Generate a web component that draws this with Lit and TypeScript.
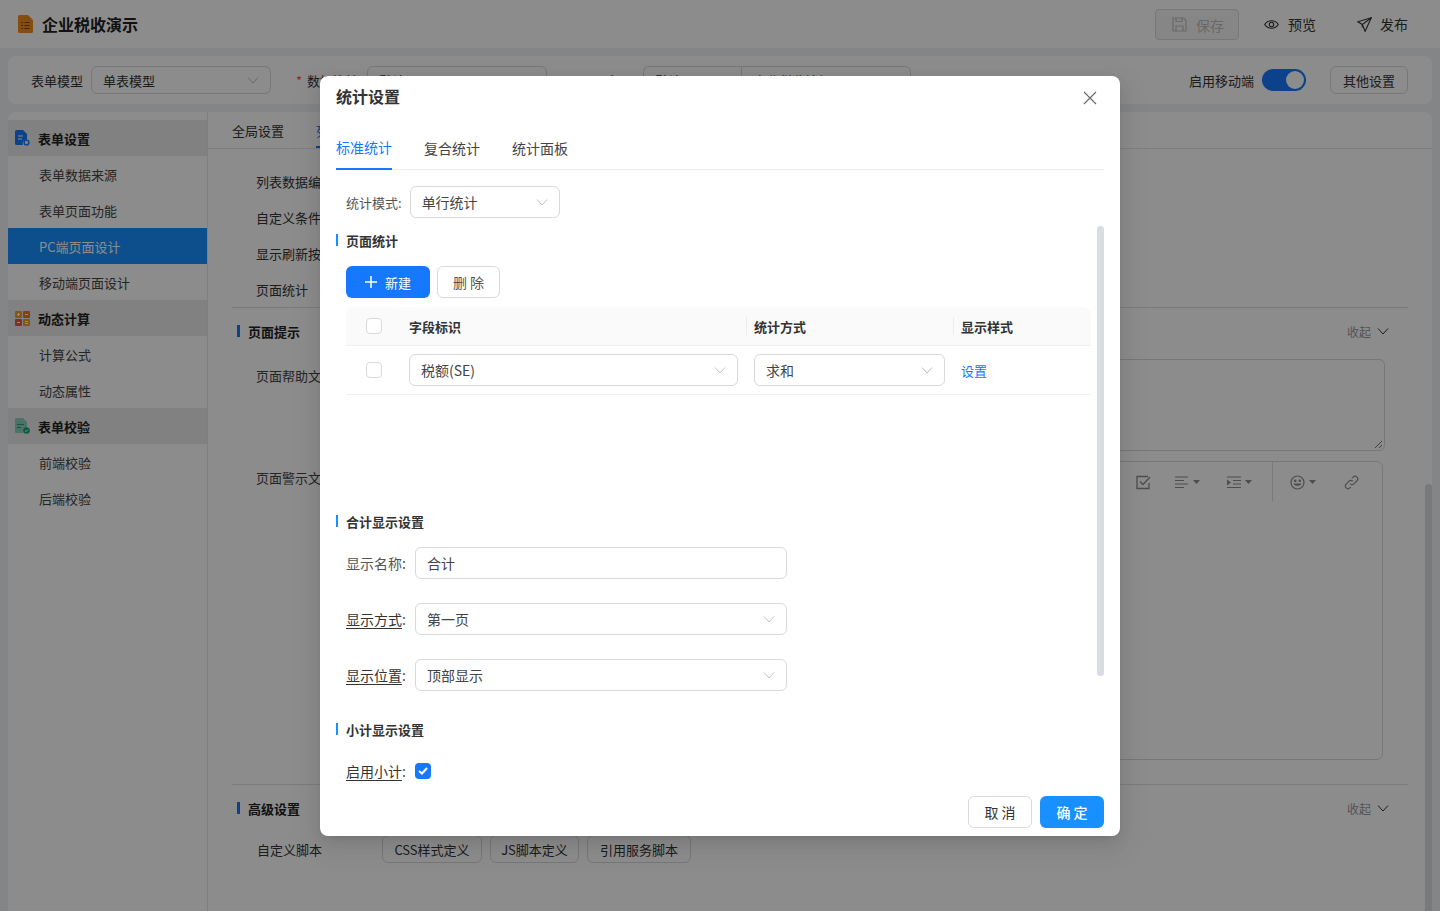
import { LitElement, html, css, svg } from "lit";
import { customElement } from "lit/decorators.js";

const chevron = (size = 12, color = "#bfbfbf") => html`<svg class="chev" width=${size} height=${size} viewBox="0 0 12 12" fill="none" stroke=${color} stroke-width="1"><path d="M1 3.5 6 9l5-5.500" /></svg>`;

const caret = svg`<path d="M0 0h7L3.500 4z" fill="#8c8c8c" />`;

const menu = [
  { title: "表单设置", icon: "form", items: ["表单数据来源", "表单页面功能", "PC端页面设计", "移动端页面设计"] },
  { title: "动态计算", icon: "calc", items: ["计算公式", "动态属性"] },
  { title: "表单校验", icon: "check", items: ["前端校验", "后端校验"] },
];

@customElement("app-root")
export class AppRoot extends LitElement {
  static styles = css`
    :host {
      display: block;
      position: relative;
      height: 911px;
      overflow: hidden;
      background: #f0f2f5;
      color: #333;
      font-family: "Noto Sans CJK SC", "Noto Sans", sans-serif;
      font-size: 13px;
    }
    .topbar {
      display: flex;
      align-items: center;
      height: 48px;
      padding: 0 32px 0 18px;
      background: #fff;
    }
    .app-name {
      margin-left: 9px;
      flex: 1;
      font-size: 16px;
      font-weight: 700;
      color: #222;
    }
    .save {
      display: flex;
      align-items: center;
      box-sizing: border-box;
      width: 84px;
      height: 31px;
      margin-top: 1px;
      padding-left: 16px;
      gap: 9px;
      border: 1px solid #d9d9d9;
      border-radius: 4px;
      background: #f5f5f5;
      color: #bfbfbf;
      font-size: 14px;
    }
    .action {
      display: flex;
      align-items: center;
      gap: 9px;
      font-size: 14px;
      color: #333;
    }
    .action.preview {
      margin-left: 25px;
    }
    .action.publish {
      margin-left: 41px;
      gap: 8px;
    }
    .filter {
      display: flex;
      align-items: center;
      height: 48px;
      margin: 8px 8px 8px 8px;
      padding: 0 24px 0 23px;
      border-radius: 8px;
      background: #fff;
    }
    .sel {
      display: flex;
      align-items: center;
      justify-content: space-between;
      box-sizing: border-box;
      border: 1px solid #d9d9d9;
      border-radius: 6px;
      background: #fff;
    }
    .filter .sel {
      height: 28px;
      margin-left: 8px;
      padding: 0 11px;
      font-size: 13px;
    }
    .req {
      margin-left: 25px;
      margin-right: 5px;
      color: #ff4d4f;
    }
    .joined {
      display: flex;
      margin-left: 8px;
    }
    .joined .sel {
      margin-left: 0;
    }
    .joined .sel:first-child {
      border-radius: 6px 0 0 6px;
      border-right: 0;
    }
    .joined .sel:last-child {
      border-radius: 0 6px 6px 0;
    }
    .spacer {
      flex: 1;
    }
    .toggle {
      display: flex;
      justify-content: flex-end;
      box-sizing: border-box;
      width: 44px;
      height: 22px;
      margin-left: 8px;
      padding: 2px;
      border-radius: 11px;
      background: #1677ff;
    }
    .toggle i {
      width: 18px;
      height: 18px;
      border-radius: 50%;
      background: #fff;
    }
    .btn {
      display: flex;
      align-items: center;
      justify-content: center;
      box-sizing: border-box;
      border: 1px solid #d9d9d9;
      border-radius: 6px;
      background: #fff;
    }
    .other {
      width: 78px;
      height: 28px;
      margin-left: 24px;
    }
    .main {
      display: flex;
      height: 799px;
      margin: 0 8px;
      border-radius: 8px 8px 0 0;
      background: #fff;
    }
    .side {
      box-sizing: border-box;
      width: 200px;
      padding-top: 8px;
      border-right: 1px solid #e8e8e8;
    }
    .group {
      display: flex;
      align-items: center;
      gap: 8px;
      height: 36px;
      padding-left: 7px;
      background: #ebebeb;
      font-weight: 700;
      color: #222;
    }
    .group svg {
      flex: none;
    }
    .item {
      display: flex;
      align-items: center;
      height: 36px;
      padding-left: 31px;
      color: #444;
    }
    .item.on {
      background: #1890ff;
      color: #fff;
    }
    .content {
      position: relative;
      flex: 1;
      min-width: 0;
    }
    .ctabs {
      display: flex;
      gap: 32px;
      height: 36px;
      padding-left: 24px;
      border-bottom: 1px solid #e8e8e8;
    }
    .ctab {
      position: relative;
      display: flex;
      align-items: center;
      height: 36px;
    }
    .ctab.on {
      color: #1677ff;
    }
    .ctab.on::after {
      content: "";
      position: absolute;
      left: 0;
      right: 0;
      bottom: 0;
      height: 2px;
      background: #1677ff;
    }
    .rows {
      padding: 14px 0 0 48px;
    }
    .row {
      display: flex;
      align-items: center;
      height: 36px;
    }
    .rule {
      height: 1px;
      margin: 0 24px 0 24px;
      background: #e0e0e0;
    }
    .sec {
      display: flex;
      align-items: center;
      height: 46px;
      margin: 0 43px 0 29px;
      font-weight: 700;
      color: #222;
    }
    .sec::before {
      content: "";
      width: 3px;
      height: 12px;
      margin-right: 8px;
      background: #1677ff;
    }
    .fold {
      display: flex;
      align-items: center;
      gap: 6px;
      margin-left: auto;
      font-size: 12px;
      font-weight: 400;
      color: #999;
    }
    .field {
      display: flex;
      padding-left: 48px;
      color: #444;
    }
    .field > span {
      width: 84px;
      margin-top: 7px;
    }
    .area {
      position: relative;
      box-sizing: border-box;
      width: 1045px;
      border: 1px solid #d9d9d9;
      border-radius: 6px;
    }
    .area.text {
      height: 92px;
      margin-left: 0;
    }
    .grip {
      position: absolute;
      right: 1px;
      bottom: 1px;
    }
    .area.editor {
      width: 1043px;
      height: 299px;
    }
    .tools {
      display: flex;
      justify-content: flex-end;
      align-items: center;
      height: 40px;
      padding-right: 23px;
    }
    .tool {
      display: flex;
      align-items: center;
      gap: 4px;
    }
    .tdiv {
      width: 1px;
      height: 40px;
      background: #e0e0e0;
    }
    .scripts {
      display: flex;
      align-items: center;
      gap: 8px;
      padding-left: 49px;
    }
    .scripts .btn {
      height: 28px;
    }
    .scripts .label {
      width: 117px;
    }
    .scrollbar {
      position: absolute;
      top: 372px;
      right: 0;
      bottom: 0;
      width: 7px;
      border-radius: 4px 4px 0 0;
      background: #d9dce1;
    }
    .mask {
      position: absolute;
      inset: 0;
      background: rgba(0, 0, 0, 0.45);
    }
    .modal {
      position: absolute;
      top: 76px;
      left: 320px;
      display: flex;
      flex-direction: column;
      box-sizing: border-box;
      width: 800px;
      height: 760px;
      padding: 0 16px;
      border-radius: 8px;
      background: #fff;
      box-shadow: 0 6px 16px rgba(0, 0, 0, 0.08), 0 3px 6px -4px rgba(0, 0, 0, 0.12), 0 9px 28px 8px rgba(0, 0, 0, 0.05);
      font-size: 14px;
    }
    .m-head {
      display: flex;
      align-items: center;
      justify-content: space-between;
      height: 40px;
      padding-right: 7px;
      font-size: 16px;
      font-weight: 700;
      color: #333;
    }
    .m-head svg {
      margin-top: 4px;
    }
    .m-tabs {
      display: flex;
      gap: 32px;
      margin-top: 8px;
      border-bottom: 1px solid #ececec;
    }
    .m-tab {
      display: flex;
      align-items: center;
      box-sizing: border-box;
      height: 46px;
      margin-bottom: -1px;
      padding-top: 1px;
      color: #444;
    }
    .m-tab.on {
      border-bottom: 2px solid #1677ff;
      color: #1677ff;
    }
    .mode {
      display: flex;
      align-items: center;
      height: 32px;
      margin-top: 16px;
      padding-left: 10px;
      font-size: 13px;
      color: #555;
    }
    .modal .sel {
      height: 32px;
      padding: 0 11px;
      color: #444;
      font-size: 14px;
    }
    .mode .sel {
      width: 150px;
      margin-left: 8px;
    }
    .m-body {
      position: relative;
      flex: none;
      height: 564px;
      margin-top: 8px;
      overflow: hidden;
    }
    .m-scroll {
      position: absolute;
      top: 0;
      right: 0;
      width: 7px;
      height: 450px;
      border-radius: 4px;
      background: #d9dce1;
    }
    .title {
      display: flex;
      align-items: center;
      height: 28px;
      font-size: 13px;
      font-weight: 700;
      color: #333;
    }
    .title::before {
      content: "";
      width: 2px;
      height: 12px;
      margin-right: 8px;
      background: #1890ff;
    }
    .ops {
      display: flex;
      gap: 7px;
      margin: 12px 0 9px 10px;
    }
    .ops .btn {
      height: 32px;
    }
    .add {
      width: 84px;
      gap: 8px;
      border: 0;
      background: #1677ff;
      color: #fff;
      font-size: 13px;
    }
    .del {
      width: 63px;
      color: #555;
      font-size: 14px;
    }
    .grid {
      display: grid;
      grid-template-columns: 55px 345px 207px 138px;
      margin-left: 10px;
      width: 745px;
    }
    .th {
      position: relative;
      display: flex;
      align-items: center;
      height: 38px;
      padding-left: 8px;
      border-bottom: 1px solid #f0f0f0;
      background: #fafafa;
      font-weight: 700;
      font-size: 13px;
      color: #333;
    }
    .th.sep::before {
      content: "";
      position: absolute;
      left: 0;
      top: 10px;
      height: 18px;
      width: 1px;
      background: #ececec;
    }
    .th:first-child {
      border-radius: 8px 0 0 0;
    }
    .th:nth-child(4) {
      border-radius: 0 8px 0 0;
    }
    .td {
      display: flex;
      align-items: center;
      height: 48px;
      padding: 0 8px;
      border-bottom: 1px solid #f0f0f0;
      font-size: 13px;
    }
    .td .sel {
      flex: 1;
      margin-right: 0;
    }
    .box {
      box-sizing: border-box;
      width: 16px;
      height: 16px;
      margin-left: 12px;
      border: 1px solid #d9d9d9;
      border-radius: 4px;
      background: #fff;
    }
    .link {
      color: #1677ff;
    }
    .gap-title {
      margin-top: 112px;
    }
    .form {
      display: flex;
      flex-direction: column;
      gap: 24px;
      margin-top: 12px;
    }
    .f-row {
      display: flex;
      align-items: center;
      height: 32px;
      padding-left: 10px;
      color: #555;
    }
    .f-label {
      display: inline-block;
      width: 69px;
      white-space: nowrap;
    }
    .f-label u {
      color: #333;
      text-underline-offset: 3px;
    }
    .f-row .sel {
      width: 372px;
    }
    .checked {
      display: flex;
      align-items: center;
      justify-content: center;
      box-sizing: border-box;
      width: 16px;
      height: 16px;
      border-radius: 4px;
      background: #1677ff;
    }
    .m-foot {
      display: flex;
      justify-content: flex-end;
      gap: 8px;
      margin-top: 6px;
    }
    .m-foot .btn {
      width: 64px;
      height: 32px;
      letter-spacing: 0;
    }
    .ok {
      border: 0;
      background: #1890ff;
      color: #fff;
      font-weight: 500;
    }
  `;

  menuIcon(kind: string) {
    if (kind === "form") {
      return html`<svg width="15" height="16" viewBox="0 0 15 16"><path d="M0 1.500A1.500 1.500 0 0 1 1.500 0H8l4 4v6a3.500 3.500 0 0 0-4 5H1.500A1.500 1.500 0 0 1 0 13.500z" fill="#1677ff"/><path d="M3 6h5M3 9h4" stroke="#fff" stroke-width="1.200"/><circle cx="11.500" cy="12.500" r="2.400" fill="none" stroke="#1677ff" stroke-width="1.400"/></svg>`;
    }
    if (kind === "calc") {
      return html`<svg width="15" height="15" viewBox="0 0 15 15"><rect width="7" height="7" rx="1" fill="#f0a020"/><rect x="8" width="7" height="7" rx="1" fill="#e87a30"/><rect y="8" width="7" height="7" rx="1" fill="#e0584c"/><rect x="8" y="8" width="7" height="7" rx="1" fill="#f0a020"/><path d="M2 3.500h3M3.500 2v3M10 3.500h3M2 11.500h3M10 10.500h3M10 12.500h3" stroke="#fff" stroke-width="1"/></svg>`;
    }
    return html`<svg width="15" height="16" viewBox="0 0 15 16"><path d="M0 1a1 1 0 0 1 1-1h7l4 4v6a3.500 3.500 0 0 0-3.500 5H1a1 1 0 0 1-1-1z" fill="#8fd0bc"/><path d="M2 6.500h7M2 9.500h4" stroke="#13a37a" stroke-width="1.100"/><circle cx="11.500" cy="12.500" r="3.300" fill="#13a37a"/><path d="M10 12.500l1.200 1.100 1.900-2" fill="none" stroke="#fff" stroke-width="1"/></svg>`;
  }

  renderToolbar() {
    const stroke = "#8c8c8c";
    return html`<div class="tools">
      <span class="tool" style="margin-right:24px"><svg width="15" height="15" viewBox="0 0 15 15" fill="none" stroke=${stroke} stroke-width="1.300"><path d="M13 8v5.500H1V1.500h11"/><path d="M4 6.500l3 3 7-7.500"/></svg></span>
      <span class="tool" style="margin-right:27px"><svg width="14" height="13" viewBox="0 0 14 13" stroke=${stroke} stroke-width="1.200"><path d="M0 1h13M0 4.500h9M0 8h13M0 11.500h9"/></svg><svg width="7" height="4" viewBox="0 0 7 4">${caret}</svg></span>
      <span class="tool" style="margin-right:20px"><svg width="14" height="13" viewBox="0 0 14 13" stroke=${stroke} stroke-width="1.200"><path d="M0 1h14M6 4.500h8M6 8h8M0 11.500h14"/><path d="M0 3.500l4 3-4 3z" fill="#8c8c8c" stroke="none"/></svg><svg width="7" height="4" viewBox="0 0 7 4">${caret}</svg></span>
      <span class="tdiv" style="margin-right:17px"></span>
      <span class="tool" style="margin-right:28px"><svg width="15" height="15" viewBox="0 0 15 15" fill="none" stroke=${stroke} stroke-width="1.200"><circle cx="7.500" cy="7.500" r="6.500"/><path d="M4.500 9c.8 1.600 5.200 1.600 6 0z" fill="#8c8c8c"/><circle cx="5.200" cy="5.700" r=".7" fill="#8c8c8c"/><circle cx="9.800" cy="5.700" r=".7" fill="#8c8c8c"/></svg><svg width="7" height="4" viewBox="0 0 7 4">${caret}</svg></span>
      <span class="tool"><svg width="15" height="15" viewBox="0 0 15 15" fill="none" stroke=${stroke} stroke-width="1.200"><path d="M6.200 8.800a2.600 2.600 0 0 0 3.700 0l3-3a2.600 2.600 0 0 0-3.700-3.700l-1 1"/><path d="M8.800 6.200a2.600 2.600 0 0 0-3.700 0l-3 3a2.600 2.600 0 0 0 3.700 3.700l1-1"/></svg></span>
    </div>`;
  }

  renderPage() {
    return html`
      <div class="topbar">
        <svg width="15" height="18" viewBox="0 0 15 18"><path d="M0 1.500A1.500 1.500 0 0 1 1.500 0H10l5 5v11.500a1.500 1.500 0 0 1-1.500 1.500h-12A1.500 1.500 0 0 1 0 16.500z" fill="#f28c1e"/><path d="M3.500 7.500h1.500M6.500 7.500h5M3.500 10.500h1.500M6.500 10.500h5M3.500 13.500h1.500M6.500 13.500h5" stroke="#7a4206" stroke-width="1.100"/></svg>
        <span class="app-name">企业税收演示</span>
        <div class="save">
          <svg width="15" height="15" viewBox="0 0 15 15" fill="none" stroke="#bfbfbf" stroke-width="1.200"><path d="M1 1h10.500L14 3.500V14H1z"/><path d="M4 1v3.500h6V1M4 14V9h7v5"/></svg>
          <span>保存</span>
        </div>
        <div class="action preview">
          <svg width="15" height="11" viewBox="0 0 15 11" fill="none" stroke="#333" stroke-width="1.100"><path d="M.7 5.500C3.800.5 11.200.5 14.300 5.500 11.200 10.500 3.800 10.500.7 5.500z"/><circle cx="7.500" cy="5.500" r="2.200"/></svg>
          <span>预览</span>
        </div>
        <div class="action publish">
          <svg width="15" height="15" viewBox="0 0 15 15" fill="none" stroke="#333" stroke-width="1.100"><path d="M14.300.7.700 4.800l4.600 2.700 2.800 6.800z"/><path d="M14.300.7 5.300 7.500v3"/></svg>
          <span>发布</span>
        </div>
      </div>
      <div class="filter">
        <span>表单模型</span>
        <div class="sel" style="width:180px"><span>单表模型</span>${chevron()}</div>
        <span class="req">*</span><span>数据连接</span>
        <div class="sel" style="width:180px"><span>默认</span>${chevron()}</div>
        <span style="margin-left:36px">页面标题</span>
        <div class="joined">
          <div class="sel" style="width:98px"><span>默认</span></div>
          <div class="sel" style="width:170px"><span>企业税收填报</span></div>
        </div>
        <span class="spacer"></span>
        <span>启用移动端</span>
        <div class="toggle"><i></i></div>
        <div class="btn other">其他设置</div>
      </div>
      <div class="main">
        <div class="side">
          ${menu.map(
            (g) => html`
              <div class="group">${this.menuIcon(g.icon)}<span>${g.title}</span></div>
              ${g.items.map((t) => html`<div class="item ${t === "PC端页面设计" ? "on" : ""}">${t}</div>`)}
            `
          )}
        </div>
        <div class="content">
          <div class="ctabs">
            <div class="ctab">全局设置</div>
            <div class="ctab on">列表设计</div>
          </div>
          <div class="rows">
            ${["列表数据编辑", "自定义条件", "显示刷新按钮", "页面统计"].map((t) => html`<div class="row">${t}</div>`)}
          </div>
          <div class="rule" style="margin-top:0"></div>
          <div class="sec" style="margin-top:0">页面提示<span class="fold">收起 ${chevron(12, "#333")}</span></div>
          <div class="field" style="margin-top:5px">
            <span>页面帮助文本</span>
            <div class="area text">
              <svg class="grip" width="9" height="9" viewBox="0 0 9 9" stroke="#555" stroke-width=".8"><path d="M1 8l7-7M5 8l3-3"/></svg>
            </div>
          </div>
          <div class="field" style="margin-top:10px">
            <span>页面警示文本</span>
            <div class="area editor">${this.renderToolbar()}</div>
          </div>
          <div class="rule" style="margin-top:24px"></div>
          <div class="sec">高级设置<span class="fold">收起 ${chevron(12, "#333")}</span></div>
          <div class="scripts" style="margin-top:4px">
            <span class="label">自定义脚本</span>
            <div class="btn" style="width:100px">CSS样式定义</div>
            <div class="btn" style="width:89px">JS脚本定义</div>
            <div class="btn" style="width:104px">引用服务脚本</div>
          </div>
          <div class="scrollbar"></div>
        </div>
      </div>
    `;
  }

  renderModal() {
    return html`
      <div class="modal">
        <div class="m-head">
          <span>统计设置</span>
          <svg width="14" height="14" viewBox="0 0 14 14" stroke="#666" stroke-width="1.100"><path d="M1 1l12 12M13 1 1 13"/></svg>
        </div>
        <div class="m-tabs">
          <div class="m-tab on">标准统计</div>
          <div class="m-tab">复合统计</div>
          <div class="m-tab">统计面板</div>
        </div>
        <div class="mode">
          <span>统计模式:</span>
          <div class="sel"><span>单行统计</span>${chevron()}</div>
        </div>
        <div class="m-body">
          <div class="m-scroll"></div>
          <div class="title">页面统计</div>
          <div class="ops">
            <div class="btn add">
              <svg width="12" height="12" viewBox="0 0 12 12" stroke="#fff" stroke-width="1.500"><path d="M6 0v12M0 6h12"/></svg>
              <span>新建</span>
            </div>
            <div class="btn del">删 除</div>
          </div>
          <div class="grid">
            <div class="th"><span class="box"></span></div>
            <div class="th">字段标识</div>
            <div class="th sep">统计方式</div>
            <div class="th sep">显示样式</div>
            <div class="td"><span class="box"></span></div>
            <div class="td"><div class="sel"><span>税额(SE)</span>${chevron()}</div></div>
            <div class="td"><div class="sel"><span>求和</span>${chevron()}</div></div>
            <div class="td"><span class="link">设置</span></div>
          </div>
          <div class="title gap-title">合计显示设置</div>
          <div class="form">
            <div class="f-row"><span class="f-label">显示名称:</span><div class="sel"><span>合计</span></div></div>
            <div class="f-row"><span class="f-label"><u>显示方式</u>:</span><div class="sel"><span>第一页</span>${chevron()}</div></div>
            <div class="f-row"><span class="f-label"><u>显示位置</u>:</span><div class="sel"><span>顶部显示</span>${chevron()}</div></div>
          </div>
          <div class="title" style="margin-top:24px">小计显示设置</div>
          <div class="f-row" style="margin-top:12px">
            <span class="f-label"><u>启用小计</u>:</span>
            <span class="checked"><svg width="10" height="8" viewBox="0 0 10 8" fill="none" stroke="#fff" stroke-width="2"><path d="M1 4l3 2.500L9 1"/></svg></span>
          </div>
        </div>
        <div class="m-foot">
          <div class="btn">取 消</div>
          <div class="btn ok">确 定</div>
        </div>
      </div>
    `;
  }

  render() {
    return html`${this.renderPage()}<div class="mask"></div>${this.renderModal()}`;
  }
}
